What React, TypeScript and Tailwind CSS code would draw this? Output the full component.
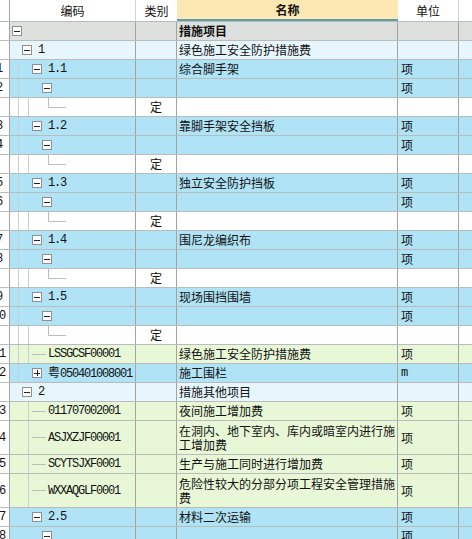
import React from 'react';

type Bg = 'gray' | 'lb' | 'blue' | 'white' | 'green';

interface Row {
  bg: Bg;
  num?: string;
  box?: '-' | '+';
  depth?: number;
  code?: string;
  lb?: string;
  name?: string;
  unit?: string;
  bold?: boolean;
  tall?: boolean;
  guides?: number[];
  leaf?: 'dash' | 'L';
}

const bgClass: Record<Bg, string> = {
  gray: 'bg-[#dde0dd]',
  lb: 'bg-[#e7f6fc]',
  blue: 'bg-[#b0e3f5]',
  white: 'bg-white',
  green: 'bg-[#e8f8d7]',
};

// box left offset inside the code cell, per tree depth
const indent: Record<number, string> = {
  0: 'pl-[2px]',
  1: 'pl-[12px]',
  2: 'pl-[22px]',
  3: 'pl-[32px]',
};

const sub = (code: string, name: string, a: string, b: string): Row[] => [
  { bg: 'blue', box: '-', depth: 2, code, name, unit: '项', num: a, guides: [8] },
  { bg: 'blue', box: '-', depth: 3, unit: '项', num: b, guides: [8] },
  { bg: 'white', lb: '定', leaf: 'L', guides: [8, 18] },
];

const rows: Row[] = [
  { bg: 'gray', box: '-', depth: 0, name: '措施项目', bold: true },
  { bg: 'lb', box: '-', depth: 1, code: '1', name: '绿色施工安全防护措施费' },
  ...sub('1.1', '综合脚手架', '1', '2'),
  ...sub('1.2', '靠脚手架安全挡板', '3', '4'),
  ...sub('1.3', '独立安全防护挡板', '5', '6'),
  ...sub('1.4', '围尼龙编织布', '7', '8'),
  ...sub('1.5', '现场围挡围墙', '9', '10'),
  { bg: 'green', code: 'LSSGCSF00001', name: '绿色施工安全防护措施费', unit: '项', num: '11', leaf: 'dash', guides: [8, 18] },
  { bg: 'blue', box: '+', depth: 2, code: '粤050401008001', name: '施工围栏', unit: 'm', num: '12', guides: [8] },
  { bg: 'lb', box: '-', depth: 1, code: '2', name: '措施其他项目' },
  { bg: 'green', code: '011707002001', name: '夜间施工增加费', unit: '项', num: '13', leaf: 'dash', guides: [18] },
  { bg: 'green', code: 'ASJXZJF00001', name: '在洞内、地下室内、库内或暗室内进行施工增加费', unit: '项', num: '14', leaf: 'dash', tall: true, guides: [18] },
  { bg: 'green', code: 'SCYTSJXF0001', name: '生产与施工同时进行增加费', unit: '项', num: '15', leaf: 'dash', guides: [18] },
  { bg: 'green', code: 'WXXAQGLF0001', name: '危险性较大的分部分项工程安全管理措施费', unit: '项', num: '16', leaf: 'dash', tall: true, guides: [18] },
  { bg: 'blue', box: '-', depth: 2, code: '2.5', name: '材料二次运输', unit: '项', num: '17' },
  { bg: 'blue', box: '-', depth: 3, unit: '项', num: '18' },
];

const mono = "font-['Liberation_Mono',monospace] text-[12px] tracking-[-1.2px]";
const cjk = "font-['Noto_Sans_CJK_SC',sans-serif] text-[12px]";

const TreeBox: React.FC<{ kind: '-' | '+' }> = ({ kind }) => (
  <span className="relative flex-shrink-0 w-[10px] h-[10px] border border-[#8f8f8f] bg-white flex items-center justify-center">
    <span className="w-[6px] h-px bg-[#222]" />
    {kind === '+' && <span className="absolute w-px h-[6px] bg-[#222]" />}
  </span>
);

const CodeCell: React.FC<{ row: Row }> = ({ row }) => {
  const h = row.tall ? 33 : 18;
  const mid = Math.floor(h / 2) + 0.5;
  return (
    <div className="relative w-[126px] flex-shrink-0 border-r border-[#a3a3a3] h-full">
      {/* tree guide lines */}
      <svg className="absolute inset-0" width="125" height={h}>
        {row.guides?.map(x => (
          <line key={x} x1={x + 0.5} y1="0" x2={x + 0.5} y2={h} stroke="#c9d0d0" strokeWidth="1" />
        ))}
        {row.leaf === 'dash' && <line x1="22" y1={mid} x2="36" y2={mid} stroke="#b8bebe" strokeWidth="1" />}
        {row.leaf === 'L' && (
          <path d={`M38.5 0 V${mid} H56`} fill="none" stroke="#b8bebe" strokeWidth="1" />
        )}
      </svg>
      <div
        className={`relative flex items-center gap-[6px] h-full ${
          row.box !== undefined ? indent[row.depth ?? 0] : 'pl-[38px]'
        }`}
      >
        {row.box && row.leaf === undefined && <TreeBox kind={row.box} />}
        {row.code && (
          <span className={`${mono} text-[#111] whitespace-nowrap`}>
            {row.code.startsWith('粤') ? (
              <>
                <span className={`${cjk} tracking-normal`}>粤</span>
                {row.code.slice(1)}
              </>
            ) : (
              row.code
            )}
          </span>
        )}
      </div>
    </div>
  );
};

const DataRow: React.FC<{ row: Row }> = ({ row }) => (
  <div className={`flex border-b border-[#b7bdbd] ${row.tall ? 'h-[34px]' : 'h-[19px]'}`}>
    <div className="w-[21px] flex-shrink-0 bg-white border-r border-[#a3a3a3] flex items-center justify-center overflow-hidden">
      <span className={`${mono} tracking-[-1px] text-[#111]`}>{row.num}</span>
    </div>
    <div className={`flex flex-1 ${bgClass[row.bg]}`}>
      <CodeCell row={row} />
      <div className={`w-[41px] flex-shrink-0 border-r border-[#a3a3a3] flex items-center justify-center ${cjk} text-[#111]`}>
        {row.lb}
      </div>
      <div
        className={`w-[221px] flex-shrink-0 border-r border-[#a3a3a3] flex items-center pl-[2px] ${cjk} leading-[14px] text-[#111] ${
          row.bold ? 'font-bold' : ''
        }`}
      >
        <span>{row.name}</span>
      </div>
      <div className="w-[61px] flex-shrink-0 border-r border-[#a3a3a3] flex items-center pl-[3px] text-[#111]">
        {row.unit === 'm' ? (
          <span className={`${mono} text-[10px]`}>m</span>
        ) : (
          <span className={cjk}>{row.unit}</span>
        )}
      </div>
      <div className="flex-1" />
    </div>
  </div>
);

const App: React.FC = () => (
  <div className="w-[472px] h-[539px] overflow-hidden bg-white">
    <div className="ml-[-11px] w-[483px]">
      {/* header */}
      <div className={`flex h-[22px] border-b border-[#b7bdbd] ${cjk} text-[#111]`}>
        <div className="w-[21px] flex-shrink-0 border-r border-[#a3a3a3]" />
        <div className="w-[126px] flex-shrink-0 border-r border-[#d4d4d4] flex items-center justify-center">编码</div>
        <div className="w-[41px] flex-shrink-0 flex items-center justify-center">类别</div>
        <div className="w-[221px] flex-shrink-0 bg-[#fde8b3] border-b-2 border-[#5f9ea6] flex items-center justify-center font-bold">
          名称
        </div>
        <div className="w-[61px] flex-shrink-0 border-r border-[#d4d4d4] flex items-center justify-center">单位</div>
        <div className="flex-1" />
      </div>
      {rows.map((row, i) => (
        <DataRow key={i} row={row} />
      ))}
    </div>
  </div>
);

export default App;
